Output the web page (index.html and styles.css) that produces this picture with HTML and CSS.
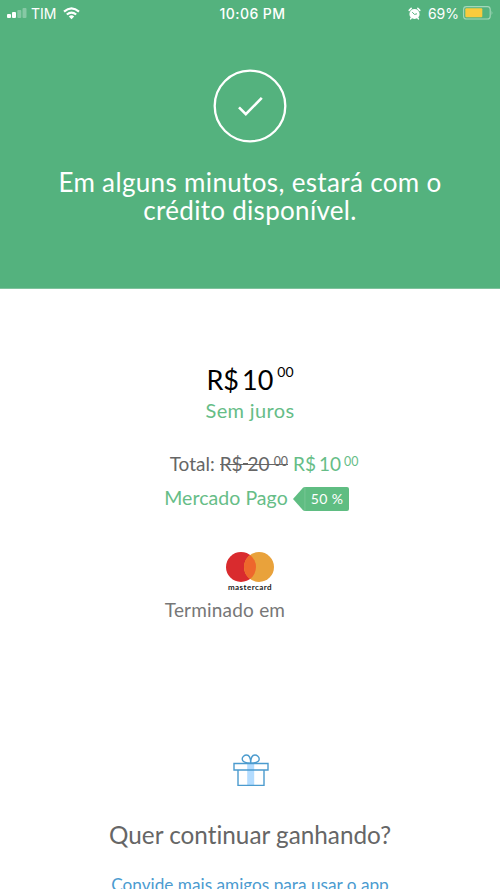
FILE: index.html
```html
<!DOCTYPE html>
<html lang="pt-BR">
<head>
<meta charset="utf-8">
<title>Mercado Pago</title>
<link rel="stylesheet" href="styles.css">
</head>
<body>
<header class="hero">
  <div class="status">
    <div class="status-left">
      <svg class="signal" width="20" height="10" viewBox="0 0 20 10" fill="#fff"><rect y="6" width="4" height="4" rx="1"/><rect x="5" y="4" width="4" height="6" rx="1"/><rect x="10.3" y="2" width="4" height="8" rx="1" opacity=".3"/><rect x="15.5" width="4" height="10" rx="1" opacity=".3"/></svg>
      <span class="carrier">TIM</span>
      <svg class="wifi" width="17" height="13" viewBox="0 0 17 13" fill="none" stroke="#fff" stroke-width="2.2"><path d="M1 4.6Q8.5-1.8 16 4.6M3.8 7.5Q8.5 3.6 13.2 7.5"/><path d="M5.8 9.4Q8.5 7.3 11.2 9.4L8.5 12.2Z" fill="#fff" stroke="none"/></svg>
    </div>
    <span class="clock">10:06 PM</span>
    <div class="status-right">
      <svg width="13" height="13" viewBox="0 0 13 13"><circle cx="6.5" cy="7" r="5.1" fill="#fff"/><path d="M1.2 3.4 3.2 1.4M11.8 3.4 9.8 1.4M3.2 11l-.6.9M9.8 11l.6.9" stroke="#fff" stroke-width="1.5" stroke-linecap="round"/><path d="M4.2 5.2 6.5 7.4 9 6.8" fill="none" stroke="#54b27e" stroke-width="1"/></svg>
      <span class="percent">69%</span>
      <svg width="31" height="14" viewBox="0 0 31 14"><rect x=".6" y=".6" width="26.6" height="12.4" rx="2.8" fill="none" stroke="#a5d8ba" stroke-width="1.1"/><rect x="2.3" y="2.3" width="17" height="9" rx="1" fill="#f9cb3d"/><path d="M28.6 4.6q1.6 2.3 0 4.6z" fill="#a5d8ba"/></svg>
    </div>
  </div>
  <svg class="check" width="74" height="74" viewBox="0 0 74 74" fill="none" stroke="#fff"><circle cx="37" cy="37" r="35.3" stroke-width="2.3"/><path d="M26 38.3 32.8 45.2 48.8 28.8" stroke-width="2.6"/></svg>
  <h1 class="title"><span class="line-one">Em alguns minutos, estará com o</span><br><span class="line-two">crédito disponível.</span></h1>
</header>
<main class="content">
  <div class="price"><span class="price-main">R$<span class="thin-gap"></span>10</span><span class="price-cents">00</span></div>
  <div class="interest">Sem juros</div>
  <div class="total"><span class="label">Total:</span><span class="old"><span class="old-main">R$<sup class="dash"></sup>20</span><span class="old-cents">00</span></span><span class="new">R$<span class="new-gap"></span>10</span><span class="new-cents">00</span></div>
  <div class="discount"><span class="brand">Mercado Pago</span><span class="tag"><svg width="13" height="24" viewBox="0 0 13 24"><path d="M0 12 10 .8Q10.8 0 12 0H13V24H12Q10.8 24 10 23.2Z" fill="#5fbd82"/><path d="M11.9 0V24" stroke="#84cb9f" stroke-width=".6"/></svg><span class="tag-text">50 %</span></span></div>
  <div class="card">
    <svg class="circles" width="48" height="30" viewBox="0 0 48 30"><circle cx="15" cy="15" r="15" fill="#d92b2e"/><circle cx="33" cy="15" r="15" fill="#e9a23b"/><path d="M24 3a15 15 0 0 1 0 24a15 15 0 0 1 0-24z" fill="#ee672c"/></svg>
    <span class="card-name">mastercard</span>
  </div>
  <div class="ending">Terminado em</div>
  <svg class="gift" width="36" height="33" viewBox="0 0 36 33" fill="none" stroke="#4b9bce" stroke-width="1.4"><path d="M14.2 9.5h7v22h-7z" fill="#b3dcff" stroke="none"/><path d="M1 9.5H35V16H1zM5 16V31.4H31V16"/><path d="M17.7 9.2C12 9.2 9.2 7.6 9.2 5.1 9.2 2.8 11.3 1 13.5 1 16.3 1 17.7 4 17.7 9.2zM17.7 9.2C23.4 9.2 26.2 7.6 26.2 5.1 26.2 2.8 24.1 1 21.9 1 19.1 1 17.7 4 17.7 9.2z"/></svg>
  <h2 class="question">Quer continuar ganhando?</h2>
  <a class="invite">Convide mais amigos para usar o app</a>
</main>
</body>
</html>
```
FILE: styles.css
```css
* { box-sizing: border-box; }
html, body { height: 889px; overflow: hidden; }
body { margin: 0; background: #fff; color: #666; font-family: Lato, "Open Sans", sans-serif; font-variant-ligatures: none; white-space: nowrap; }
svg { display: block; flex: none; }
.hero { height: 289px; background: #54b27e; border-bottom: 1px solid #7fc29d; color: #fff; display: flex; flex-direction: column; align-items: center; }
.status { width: 100%; height: 26px; padding: 0 6px 0 7px; display: grid; grid-template-columns: 1fr auto 1fr; align-items: center; font-family: Inter, sans-serif; font-size: 14px; }
.status-left, .status-right { display: flex; align-items: center; }
.status-right { justify-content: flex-end; }
.carrier { margin: 0 7px 0 4px; }
.clock { font-weight: 500; font-size: 14px; letter-spacing: .45px; padding-left: 4px; }
.percent { margin: 0 4px 0 7px; font-size: 14px; }
.check { margin-top: 43px; }
.title { margin: 25px 0 0; font-size: 26px; line-height: 28px; font-weight: 400; text-align: center; }
.line-one { letter-spacing: .35px; }
.line-two { letter-spacing: .3px; }
.content { height: 600px; display: flex; flex-direction: column; align-items: center; }
.price { margin-top: 74px; height: 34px; display: flex; color: #000; line-height: 34px; }
.price-main { font-size: 27px; }
.thin-gap { display: inline-block; width: 3px; }
.price-cents { margin-left: 4px; font-size: 14px; line-height: 17px; }
.interest { margin-top: 1px; font-size: 20px; line-height: 24px; color: #66bd87; letter-spacing: .35px; }
.total { margin: 30px 0 0 28px; height: 24px; display: flex; font-size: 19px; line-height: 24px; }
.label { margin-right: 5px; }
.old { display: flex; position: relative; }
.old::after { content: ""; position: absolute; left: 0; right: 0; top: 12px; height: 1px; background: #666; }
.dash { display: inline-block; width: 5px; height: 1px; background: #666; }
.old-cents { margin-left: 4px; font-size: 12.4px; line-height: 19px; }
.new, .new-cents { color: #66bd87; }
.new { margin-left: 5px; }
.new-gap { display: inline-block; width: 3px; }
.new-cents { margin-left: 3px; font-size: 12.4px; line-height: 19px; }
.discount { margin: 11px 0 0 13px; height: 24px; display: flex; align-items: center; font-size: 19.5px; color: #66bd87; }
.brand { letter-spacing: .05px; line-height: 24px; padding-bottom: 3px; }
.tag { margin-left: 5px; display: flex; height: 24px; color: #fff; }
.tag-text { width: 43px; background: #5fbd82; border-radius: 0 2px 2px 0; font-size: 14px; line-height: 23px; padding-left: 5px; letter-spacing: .4px; }
.card { margin-top: 41px; display: flex; flex-direction: column; align-items: center; height: 40px; }
.card-name { font-size: 8px; line-height: 10px; font-weight: 700; color: #222; letter-spacing: .45px; }
.ending { margin: 6px 50px 0 0; font-size: 19px; line-height: 24px; color: #777; letter-spacing: .2px; }
.gift { margin: 132px 0 0 2px; }
.question { margin: 33px 0 0; font-size: 24.3px; line-height: 30px; font-weight: 400; }
.invite { margin-top: 24px; font-size: 17.2px; line-height: 22px; color: #4b9bd0; }
```
